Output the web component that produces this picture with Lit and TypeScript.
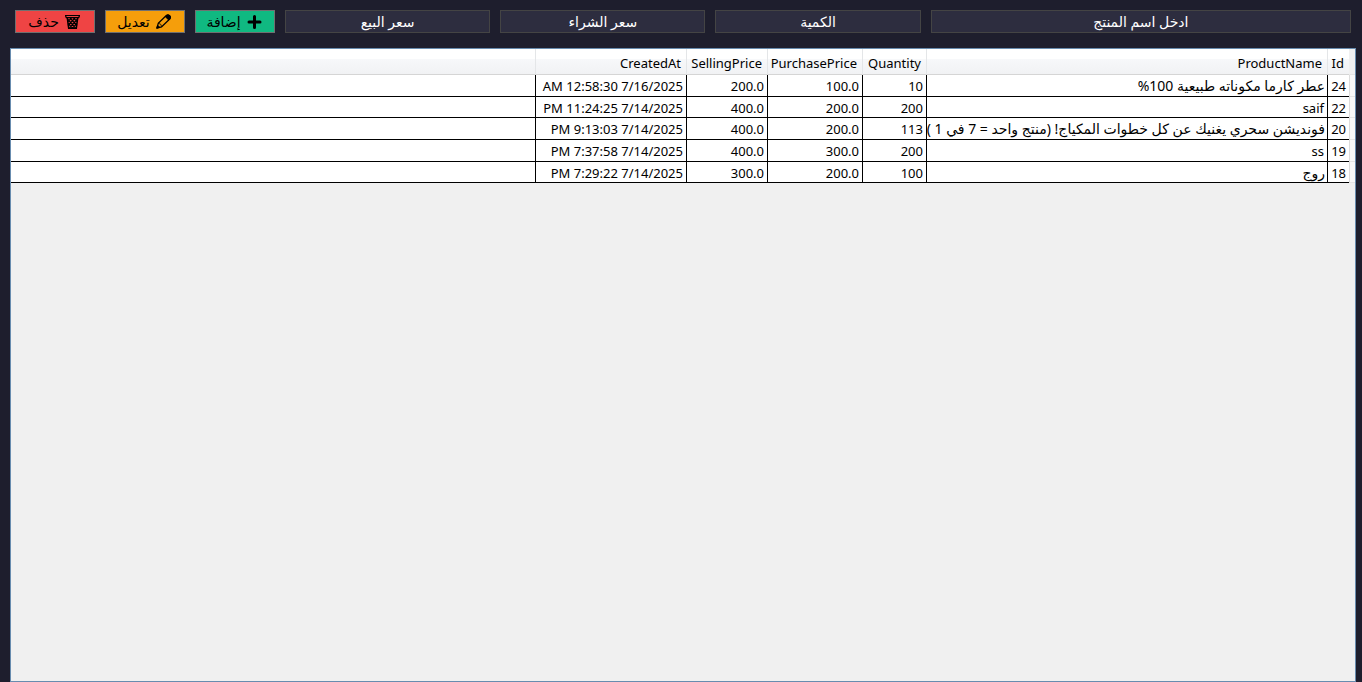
import { LitElement, html, css, svg } from "lit";
import { customElement, property, state } from "lit/decorators.js";

interface Product {
  id: number;
  name: string;
  quantity: number;
  purchase: string;
  selling: string;
  created: string;
}

const trashIcon = svg`<g fill="none" stroke="#000">
  <path d="M0.500 1.500 H14.500 L13.700 3.700 H1.300 Z" stroke-width="1.200" stroke-linejoin="round"/>
  <path d="M2.300 4 L3.700 14.300 H11.300 L12.700 4" stroke-width="1.500"/>
  <path d="M2.500 5 L10.500 14 M5 4 L12 11.500 M8.500 4 L12.500 8 M12.500 5 L4.500 14 M10 4 L3 11.500 M6.500 4 L2.500 8 M7.500 14 L3 9.500 M7.500 14 L12 9.500" stroke-width="1.200"/>
</g>`;

const pencilIcon = svg`<g stroke="#000" stroke-linejoin="round">
  <path d="M0.800 14.200 L2.300 9.300 L10.300 1.500 Q12 0.300 13.700 1.700 Q15 3.200 14 4.700 L5.700 12.800 Z" fill="none" stroke-width="1.200"/>
  <path d="M9.300 2.700 L10.500 1.400 Q12 0.300 13.700 1.700 Q15 3.200 14 4.700 L12.600 5.900 Z" fill="#000" stroke-width="1"/>
  <path d="M0.800 14.200 L1.700 11.300 L3.700 13.300 Z" fill="#000" stroke-width="1"/>
  <path d="M2.300 9.300 Q5.500 9.500 5.700 12.800" fill="none" stroke-width="0.800"/>
</g>`;

const plusIcon = svg`<path d="M7.500 2.500 V13.500 M2 8 H13" fill="none" stroke="#000" stroke-width="3" stroke-linecap="round"/>`;

@customElement("tool-button")
class ToolButton extends LitElement {
  @property() label = "";
  @property() kind = "add";

  static styles = css`
    :host { display: block; padding: 0 5px; }
    button {
      box-sizing: border-box;
      display: flex;
      align-items: center;
      justify-content: center;
      gap: 6px;
      width: 80px;
      height: 23px;
      margin: 0;
      padding: 0 2px 0 0;
      border: 1px solid #707070;
      color: #000;
      font: 14px/20px "Noto Sans", "DejaVu Sans", sans-serif;
    }
    .add { background: #10b981; }
    .edit { background: #f59e0b; }
    .delete { background: #ef4444; }
    svg { flex: none; width: 15px; height: 15px; }
  `;

  render() {
    const icon = this.kind === "add" ? plusIcon : this.kind === "edit" ? pencilIcon : trashIcon;
    return html`<button type="button" class=${this.kind}>
      <svg viewBox="0 0 15 15" aria-hidden="true">${icon}</svg><span>${this.label}</span>
    </button>`;
  }
}

@customElement("app-root")
class AppRoot extends LitElement {
  @state() private products: Product[] = [
    { id: 24, name: "عطر كارما مكوناته طبيعية 100%", quantity: 10, purchase: "100.0", selling: "200.0", created: "7/16/2025 12:58:30 AM" },
    { id: 22, name: "saif", quantity: 200, purchase: "200.0", selling: "400.0", created: "7/14/2025 11:24:25 PM" },
    { id: 20, name: "فونديشن سحري يغنيك عن كل خطوات المكياج! (منتج واحد = 7 في 1 )", quantity: 113, purchase: "200.0", selling: "400.0", created: "7/14/2025 9:13:03 PM" },
    { id: 19, name: "ss", quantity: 200, purchase: "300.0", selling: "400.0", created: "7/14/2025 7:37:58 PM" },
    { id: 18, name: "روج", quantity: 100, purchase: "200.0", selling: "300.0", created: "7/14/2025 7:29:22 PM" },
  ];

  static styles = css`
    :host {
      box-sizing: border-box;
      display: flex;
      flex-direction: column;
      gap: 15px;
      min-height: 100vh;
      padding: 10px 6px 0 10px;
      direction: rtl;
      background: #1e1e2d;
      font: 13px/18px "Noto Sans", "DejaVu Sans", sans-serif;
      color: #000;
    }
    .toolbar {
      display: grid;
      grid-template-columns: minmax(0, 2fr) repeat(3, minmax(0, 1fr)) repeat(3, 90px);
    }
    .field { display: block; padding: 0 5px; }
    .field input {
      box-sizing: border-box;
      display: block;
      width: 100%;
      height: 23px;
      margin: 0;
      padding: 0 2px;
      border: 1px solid #444;
      border-radius: 0;
      outline: none;
      background: #2d2d3f;
      color: #fff;
      font: 14px/20px "Noto Sans", "DejaVu Sans", sans-serif;
      text-align: center;
    }
    .field input::placeholder { color: #fff; opacity: 1; }
    .grid {
      flex: 1;
      border: 1px solid #688caf;
      background: #f0f0f0;
    }
    table {
      width: 100%;
      table-layout: fixed;
      border-collapse: separate;
      border-spacing: 0;
    }
    .c-gutter { width: 6px; }
    .c-id { width: 22px; }
    .c-name { width: 401px; }
    .c-quantity { width: 64px; }
    .c-purchase { width: 95px; }
    .c-selling { width: 81px; }
    .c-created { width: 151px; }
    th, td {
      box-sizing: border-box;
      overflow: hidden;
      white-space: nowrap;
      text-align: right;
      font-weight: 400;
    }
    thead th {
      height: 26px;
      padding: 3px 5px 0 0;
      border-bottom: 1px solid #d5d5d5;
      border-left: 1px solid #e4e6e8;
      background: linear-gradient(#fff 0 40%, #f7f8fa 40%, #f1f2f4 100%);
    }
    thead .blank { border-left: 0; }
    tbody tr { height: 22px; }
    tbody tr:nth-child(3n + 2) { height: 21px; }
    tbody td {
      padding: 1px 3px 0 0;
      border-bottom: 1px solid #000;
      border-left: 1px solid #000;
      background: #fff;
    }
    tbody .arabic { padding-right: 2px; font-size: 14px; }
    tbody .blank { border-left: 0; }
    thead .gutter, tbody .gutter {
      padding: 0;
      border-left: 1px solid #dcdcdc;
      border-bottom: 1px solid #e4e4e4;
      background: #f0f0f0;
    }
    thead .gutter { border-left-color: #f0f0f0; }
    tbody .gutter { background: #f8f8f8; }
  `;

  render() {
    const fields = ["ادخل اسم المنتج", "الكمية", "سعر الشراء", "سعر البيع"];
    const heads = ["Id", "ProductName", "Quantity", "PurchasePrice", "SellingPrice", "CreatedAt"];
    return html`
      <div class="toolbar">
        ${fields.map((f) => html`<label class="field"><input type="text" placeholder=${f} aria-label=${f} /></label>`)}
        <tool-button kind="add" label="إضافة"></tool-button>
        <tool-button kind="edit" label="تعديل"></tool-button>
        <tool-button kind="delete" label="حذف"></tool-button>
      </div>
      <div class="grid">
        <table>
          <colgroup>
            <col class="c-gutter" /><col class="c-id" /><col class="c-name" /><col class="c-quantity" />
            <col class="c-purchase" /><col class="c-selling" /><col class="c-created" /><col />
          </colgroup>
          <thead>
            <tr>
              <th class="gutter"></th>
              ${heads.map((h) => html`<th scope="col">${h}</th>`)}
              <th class="blank"></th>
            </tr>
          </thead>
          <tbody>
            ${this.products.map((p) => html`<tr>
              <td class="gutter"></td>
              <td>${p.id}</td>
              <td class=${/[\u0600-\u06ff]/.test(p.name) ? "arabic" : "latin"}>${p.name}</td>
              <td>${p.quantity}</td>
              <td>${p.purchase}</td>
              <td>${p.selling}</td>
              <td>${p.created}</td>
              <td class="blank"></td>
            </tr>`)}
          </tbody>
        </table>
      </div>
    `;
  }
}
